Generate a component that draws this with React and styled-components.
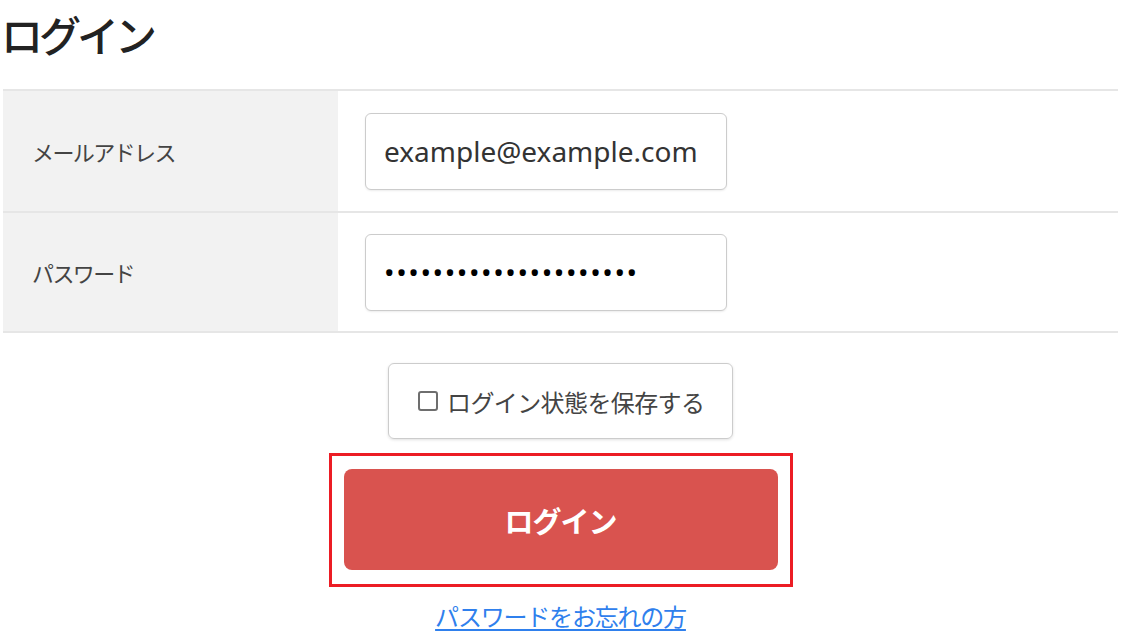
import styled, { createGlobalStyle } from 'styled-components';

const GlobalStyle = createGlobalStyle`
	html, body {
		margin: 0;
		padding: 0;
		background: #ffffff;
	}
	body {
		font-family: 'Noto Sans', 'Noto Sans CJK JP', sans-serif;
		color: #333333;
	}
`;

const Page = styled.div`
	width: 1115px;
	padding: 0 0 0 3px;
`;

const Title = styled.h1`
	margin: 0 0 0 -2px;
	height: 89px;
	font-family: 'Noto Sans CJK JP', sans-serif;
	font-size: 42px;
	font-weight: 500;
	line-height: 68px;
	color: #222222;
	letter-spacing: -4px;
`;

const FormTable = styled.div`
	border-top: 2px solid #e6e6e6;
`;

const Row = styled.div`
	display: grid;
	grid-template-columns: 335px 1fr;
	height: ${(props) => props.h}px;
	border-bottom: 2px solid #e6e6e6;
`;

const LabelCell = styled.div`
	display: flex;
	align-items: center;
	padding-left: 29px;
	background: #f2f2f2;
	font-family: 'Noto Sans CJK JP', sans-serif;
	font-size: 22px;
	color: #444444;
	letter-spacing: -1.6px;
`;

const FieldCell = styled.div`
	display: flex;
	align-items: center;
	padding-left: 27px;
`;

const Input = styled.input`
	box-sizing: border-box;
	width: 362px;
	height: 77px;
	padding: 0 18px;
	border: 1px solid #cccccc;
	border-radius: 6px;
	background: #ffffff;
	box-shadow: 0 1px 2px rgba(0, 0, 0, 0.08);
	font-family: 'Noto Sans', sans-serif;
	font-size: 28px;
	letter-spacing: ${(props) => (props.type === 'password' ? '1.6px' : '0')};
	color: ${(props) => (props.type === 'password' ? '#000000' : '#333333')};
	outline: none;
`;

const Actions = styled.div`
	display: flex;
	flex-direction: column;
	align-items: center;
	padding-top: 30px;
`;

const RememberBox = styled.label`
	box-sizing: border-box;
	display: flex;
	align-items: center;
	gap: 9px;
	width: 345px;
	height: 76px;
	padding-left: 29px;
	border: 1px solid #cccccc;
	border-radius: 6px;
	box-shadow: 0 1px 3px rgba(0, 0, 0, 0.12);
	font-family: 'Noto Sans CJK JP', sans-serif;
	font-size: 24px;
	color: #444444;
	letter-spacing: -0.6px;
`;

const CheckMark = styled.span`
	box-sizing: border-box;
	width: 20px;
	height: 20px;
	border: 2px solid #6e6e6e;
	border-radius: 3px;
	background: #ffffff;
`;

const HighlightFrame = styled.div`
	margin-top: 14px;
	padding: 13px 12px 14px;
	border: 3px solid #ec1c24;
`;

const SubmitButton = styled.button`
	display: block;
	width: 434px;
	height: 101px;
	border: none;
	border-radius: 8px;
	background: #d9534f;
	color: #ffffff;
	font-family: 'Noto Sans CJK JP', sans-serif;
	font-size: 29px;
	font-weight: 700;
	letter-spacing: -1px;
	cursor: pointer;
`;

const ForgotLink = styled.a`
	margin-top: 14px;
	font-family: 'Noto Sans CJK JP', sans-serif;
	font-size: 24px;
	line-height: 30px;
	color: #2f80ed;
	text-decoration: underline;
	text-underline-offset: 3px;
	letter-spacing: -1.2px;
`;

export default function App() {
	return (
		<>
			<GlobalStyle />
			<Page>
				<Title>ログイン</Title>
				<FormTable>
					<Row h={120}>
						<LabelCell>メールアドレス</LabelCell>
						<FieldCell>
							<Input type="text" defaultValue="example@example.com" />
						</FieldCell>
					</Row>
					<Row h={118}>
						<LabelCell>パスワード</LabelCell>
						<FieldCell>
							<Input type="password" defaultValue="passwordpassword12345" />
						</FieldCell>
					</Row>
				</FormTable>
				<Actions>
					<RememberBox>
						<CheckMark />
						ログイン状態を保存する
					</RememberBox>
					<HighlightFrame>
						<SubmitButton>ログイン</SubmitButton>
					</HighlightFrame>
					<ForgotLink href="#">パスワードをお忘れの方</ForgotLink>
				</Actions>
			</Page>
		</>
	);
}
